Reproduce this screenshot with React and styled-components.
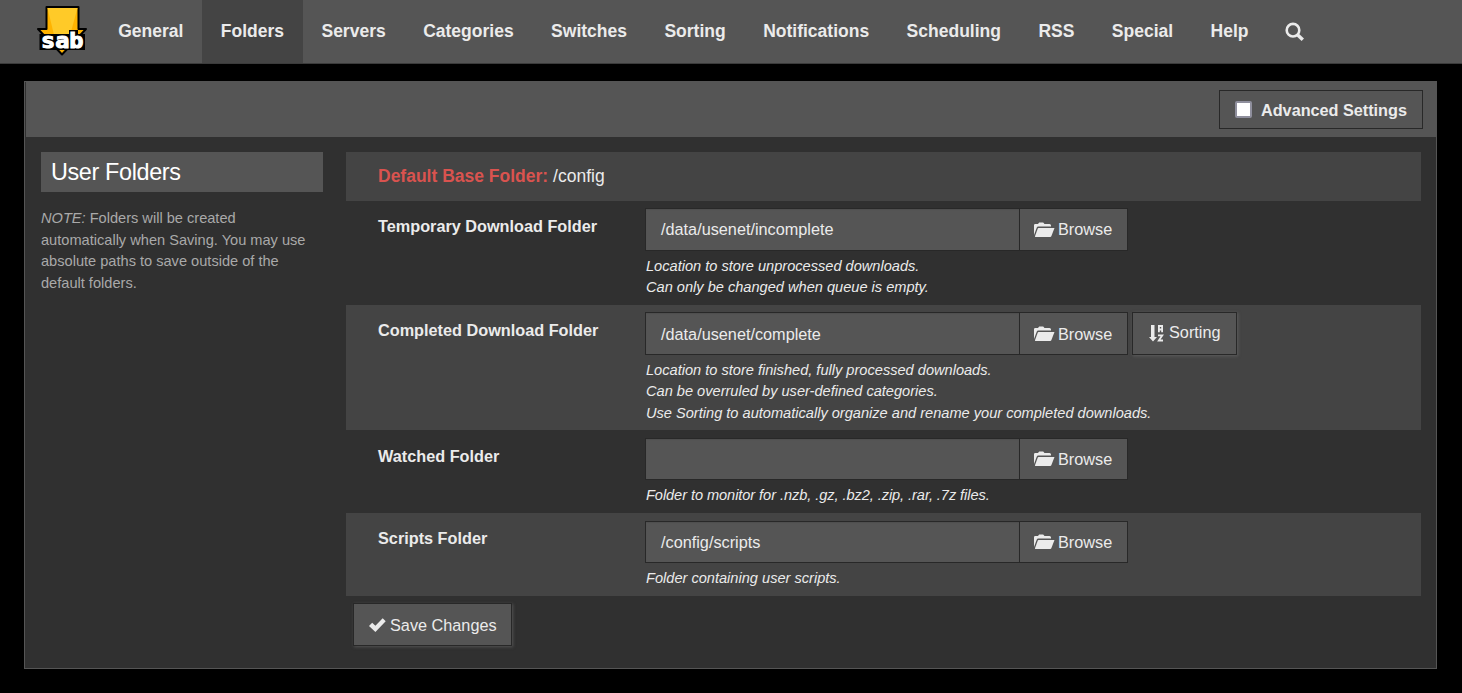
import React from "react";
import styled, { createGlobalStyle } from "styled-components";

const Global = createGlobalStyle`
  * { box-sizing: border-box; }
  body { margin: 0; background: #000; color: #ebebeb; font-family: "Liberation Sans", Arial, sans-serif; font-size: 16.25px; overflow: hidden; }
  svg { display: block; flex: none; }
`;

const Nav = styled.nav`
  display: flex;
  height: 64px;
  padding-left: 25px;
  background: #555;
  border-bottom: 1px solid #3b3b3b;
`;
const Brand = styled.a`
  width: 74.4px;
  padding: 5px 0 0 12px;
`;
const NavItem = styled.a`
  padding: ${(p) => (p.$icon ? "22px 18px 0" : "21px 18.74px 0")};
  font-size: 17.5px;
  line-height: 20px;
  font-weight: bold;
  white-space: nowrap;
  background: ${(p) => (p.$active ? "#444" : "transparent")};
`;
const Panel = styled.main`
  height: 588px;
  margin: 17px 25px 0 24px;
  border: 1px solid #555;
  background: #303030;
`;
const PanelHeader = styled.header`
  display: flex;
  justify-content: flex-end;
  height: 55px;
  padding: 8px 13px 0 0;
  background: #555;
  border-left: 1px solid #303030;
`;
const Toggle = styled.label`
  display: flex;
  align-items: center;
  width: 204px;
  height: 39px;
  padding: 0 0 0 15px;
  gap: 9px;
  border: 1px solid #282828;
  font-weight: bold;
  letter-spacing: -0.02px;
  white-space: nowrap;
`;
const ToggleText = styled.span`
  padding-top: 2px;
`;
const Checkbox = styled.span`
  width: 17px;
  height: 17px;
  border: 2px solid #8f8f9d;
  border-radius: 2px;
  background: #fff;
`;
const Body = styled.div`
  display: flex;
  gap: 23px;
  padding: 15px 15px 0 16px;
`;
const Sidebar = styled.aside`
  width: 282px;
`;
const Title = styled.h3`
  height: 40px;
  margin: 0 0 16px;
  padding-left: 10px;
  background: #555;
  color: #fff;
  font-size: 23.4px;
  line-height: 40px;
  font-weight: normal;
  letter-spacing: -0.36px;
`;
const Note = styled.p`
  margin: 0;
  color: #a9a9a9;
  font-size: 14.6px;
  line-height: 21.6px;
  white-space: nowrap;
`;
const Form = styled.form`
  width: 1075px;
`;
const Row = styled.div`
  display: flex;
  height: ${(p) => p.$height}px;
  padding: ${(p) => p.$top}px 0 0 32px;
  background: ${(p) => (p.$shaded ? "#444" : "transparent")};
`;
const BaseFolder = styled.div`
  font-size: 17.5px;
  line-height: 48px;
  strong { color: #d9534f; }
`;
const Label = styled.label`
  width: 267px;
  padding-top: ${(p) => p.$top}px;
  font-weight: bold;
  line-height: 20px;
`;
const Controls = styled.div`
  display: flex;
`;
const Input = styled.div`
  width: 375px;
  height: ${(p) => p.$height}px;
  padding: ${(p) => p.$drop || 0}px 0 0 15px;
  line-height: ${(p) => p.$height - 2}px;
  background: #555;
  border: 1px solid #282828;
  box-shadow: inset 0 1px 1px rgba(0, 0, 0, 0.075);
`;
const Button = styled.button`
  display: flex;
  align-items: center;
  gap: ${(p) => p.$gap || 3}px;
  width: ${(p) => p.$width}px;
  height: ${(p) => p.$height || 43}px;
  margin: ${(p) => p.$margin || "0"};
  padding: ${(p) => p.$pad || "0 0 0 14px"};
  color: #ebebeb;
  font: inherit;
  white-space: nowrap;
  background: #555;
  border: 1px solid #282828;
  box-shadow: ${(p) => (p.$raised ? "1px 1px 3px rgba(120, 120, 120, 0.5)" : "none")};
  svg { margin-bottom: ${(p) => p.$iconLift || 0}px; }
`;
const Help = styled.p`
  margin: 5px 0 0 1px;
  font-size: 14.6px;
  line-height: 21.4px;
  font-style: italic;
  white-space: nowrap;
  letter-spacing: ${(p) => p.$spacing || 0}px;
`;

const Logo = () => (
  <svg width="50" height="51" viewBox="0 0 50 51">
    <path d="M9.500 2h32v22h7.500L25 49.500 1 24h8.500z" fill="#ffb300" stroke="#000" strokeWidth="2" strokeLinejoin="round" />
    <path d="M10.500 3h30L32 34H18z" fill="#ffca28" />
    <path d="M2.500 29H32v-4h9v4h7v16H2.500z" fill="#000" />
    <text x="4" y="42.500" fontFamily="DejaVu Sans Mono" fontWeight="bold" fontSize="21.500" textLength="42.500" lengthAdjust="spacingAndGlyphs" fill="#fff" stroke="#fff" strokeWidth="1.100" strokeLinejoin="miter">sab</text>
  </svg>
);
const FolderIcon = () => (
  <svg width="21" height="16" viewBox="0 0 21 16" fill="#ebebeb">
    <path d="M0 13V3.200Q0 2 1.200 2H4L5.200.5h4L10.500 2h5Q17 2 17 3.500V4.500H4.200Q3.200 4.500 2.800 5.500z" />
    <path d="M4.500 6H20.500L17.300 14.300Q17 15 16.200 15H1.300Q.8 15 1 14.300L3.700 6.700Q4 6 4.500 6z" />
  </svg>
);
const SortIcon = () => (
  <svg width="15" height="17" viewBox="0 0 15 17" fill="none" stroke="#ebebeb" strokeWidth="1.800">
    <path d="M2 0h3.500v12H8L4 16.500 0 12h2z" fill="#ebebeb" stroke="none" />
    <path d="M9.900 7.200V1h3.200V7.200M9.900 4.500h3.200M9 10.300h4.300L9.800 15.500H14" />
  </svg>
);
const CheckIcon = () => (
  <svg width="17" height="14" viewBox="0 0 17 14" fill="#ebebeb">
    <path d="M0 8l3.200-3.200 3.200 3L13.700.3l3 2.900L6.400 14z" />
  </svg>
);
const SearchIcon = () => (
  <svg width="20" height="20" viewBox="0 0 20 20" fill="none" stroke="#ebebeb">
    <circle cx="8" cy="8.200" r="6.300" strokeWidth="2.600" />
    <path d="M12.500 12.700L17.800 17.800" strokeWidth="3.400" />
  </svg>
);

const tabs = ["General", "Folders", "Servers", "Categories", "Switches", "Sorting", "Notifications", "Scheduling", "RSS", "Special", "Help"];

const folders = [
  { label: "Temporary Download Folder", value: "/data/usenet/incomplete", height: 104, top: 7, labelTop: 8, control: 43, help: ["Location to store unprocessed downloads.", "Can only be changed when queue is empty."] },
  { label: "Completed Download Folder", value: "/data/usenet/complete", height: 125, top: 7, labelTop: 8, control: 43, drop: 1, sorting: true, help: ["Location to store finished, fully processed downloads.", "Can be overruled by user-defined categories.", "Use Sorting to automatically organize and rename your completed downloads."] },
  { label: "Watched Folder", value: "", height: 83, top: 8, labelTop: 8, control: 42, spacing: -0.07, help: ["Folder to monitor for .nzb, .gz, .bz2, .zip, .rar, .7z files."] },
  { label: "Scripts Folder", value: "/config/scripts", height: 83, top: 8, labelTop: 7, control: 42, help: ["Folder containing user scripts."] },
];

const Lines = ({ items }) => items.map((t) => <React.Fragment key={t}>{t}<br /></React.Fragment>);

export default function App() {
  return (
    <>
      <Global />
      <Nav>
        <Brand><Logo /></Brand>
        {tabs.map((t) => <NavItem key={t} $active={t === "Folders"}>{t}</NavItem>)}
        <NavItem $icon><SearchIcon /></NavItem>
      </Nav>
      <Panel>
        <PanelHeader>
          <Toggle><Checkbox /><ToggleText>Advanced Settings</ToggleText></Toggle>
        </PanelHeader>
        <Body>
          <Sidebar>
            <Title>User Folders</Title>
            <Note>
              <em>NOTE:</em> Folders will be created<br />automatically when Saving. You may use<br />absolute paths to save outside of the<br />default folders.
            </Note>
          </Sidebar>
          <Form>
            <Row $height={49} $top={0} $shaded>
              <BaseFolder><strong>Default Base Folder:</strong> /config</BaseFolder>
            </Row>
            {folders.map((f, i) => (
              <Row key={f.label} $height={f.height} $top={f.top} $shaded={i % 2 === 1}>
                <Label $top={f.labelTop}>{f.label}</Label>
                <div>
                  <Controls>
                    <Input $height={f.control} $drop={f.drop}>{f.value}</Input>
                    <Button type="button" $width={109} $height={f.control} $margin="0 0 0 -1px" $pad={f.drop ? "2px 0 0 14px" : undefined} $iconLift={f.drop ? 2 : 0}><FolderIcon />Browse</Button>
                    {f.sorting && <Button type="button" $width={105} $gap={5} $margin="0 0 0 4px" $pad="0 0 2px 16px" $iconLift={-2} $raised><SortIcon />Sorting</Button>}
                  </Controls>
                  <Help $spacing={f.spacing}><Lines items={f.help} /></Help>
                </div>
              </Row>
            ))}
            <Button type="button" $width={159} $gap={4} $margin="7px 0 0 7px" $pad="2px 0 0 15px" $iconLift={2} $raised><CheckIcon />Save Changes</Button>
          </Form>
        </Body>
      </Panel>
    </>
  );
}
